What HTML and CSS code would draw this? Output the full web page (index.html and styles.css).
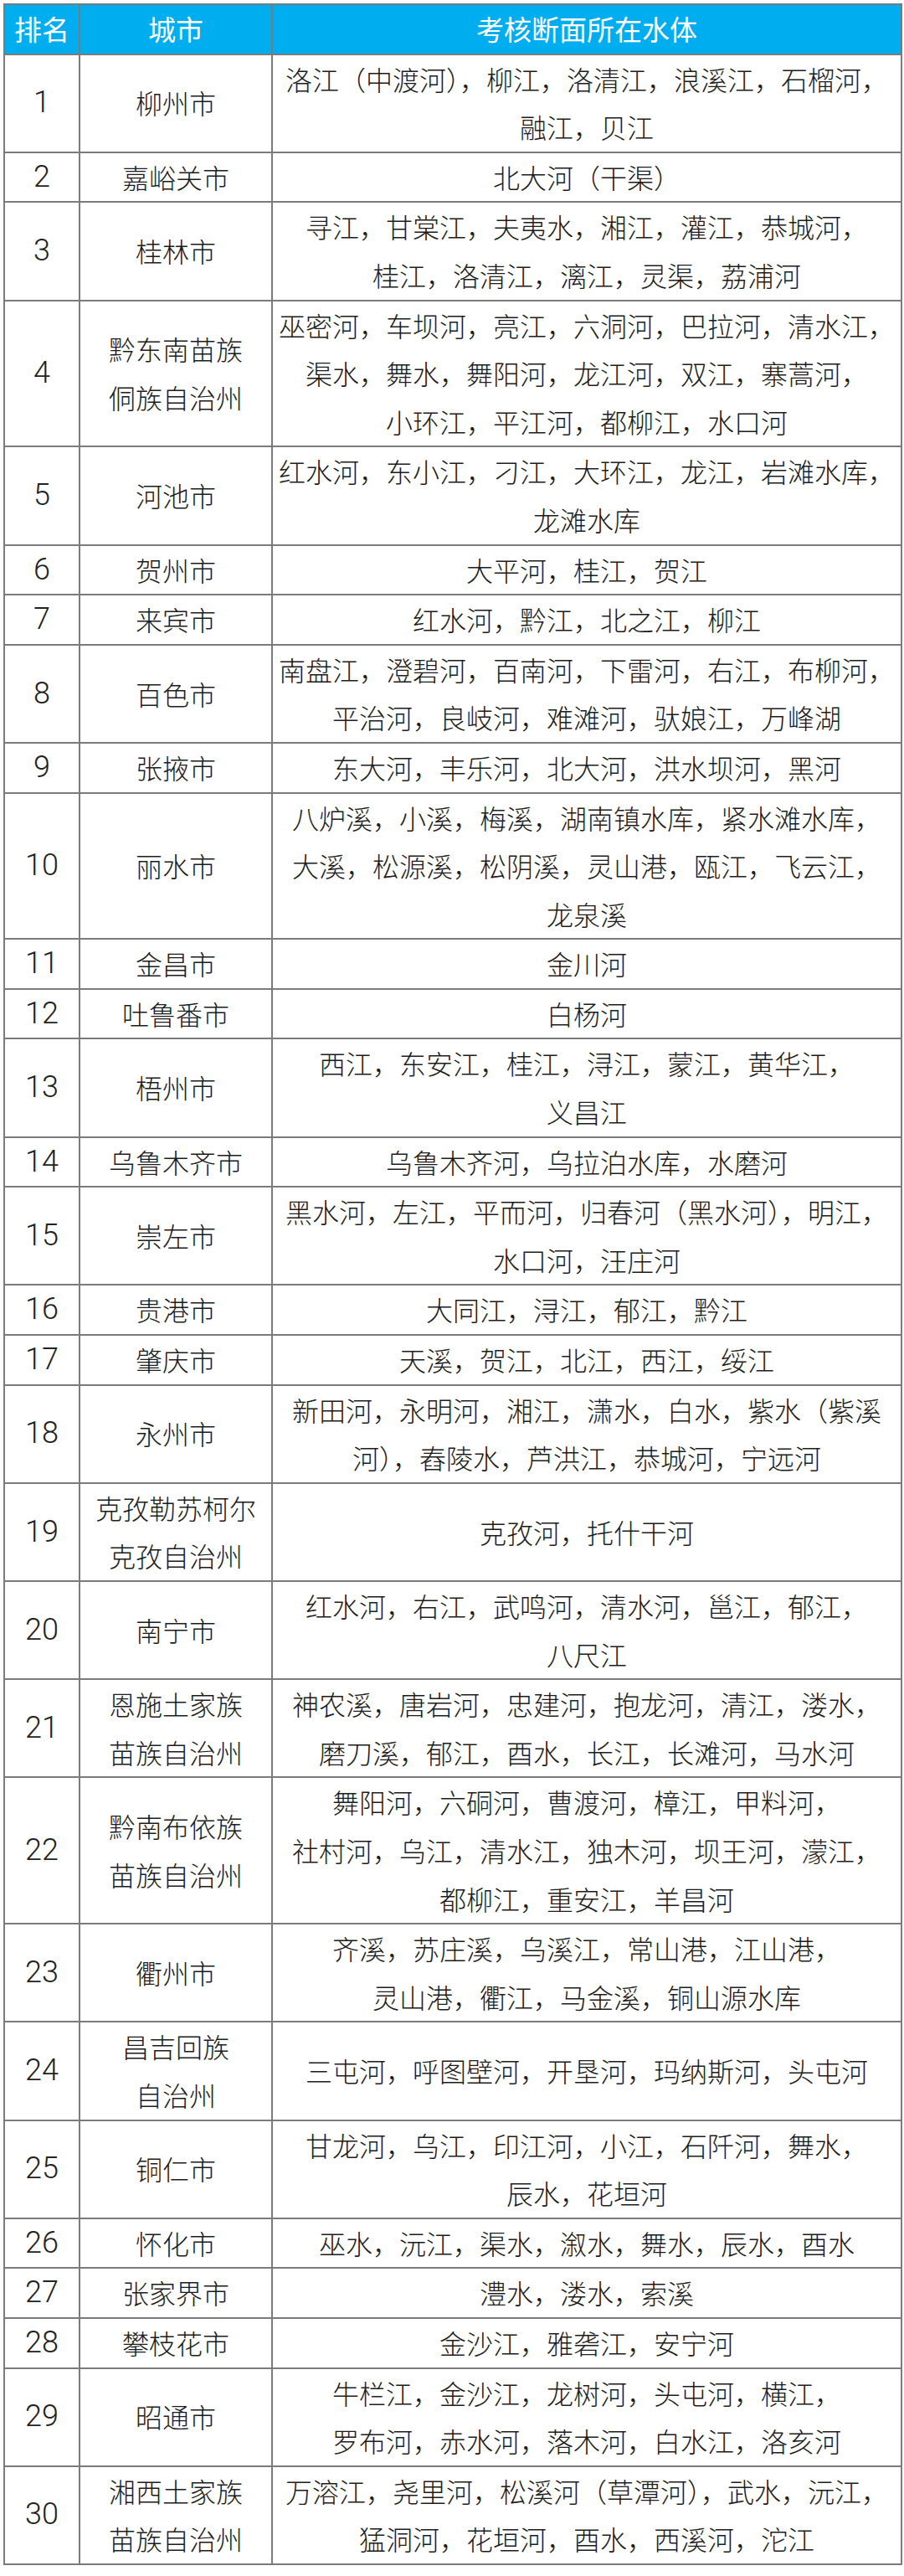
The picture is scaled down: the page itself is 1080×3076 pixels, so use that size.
FILE: index.html
```html
<!DOCTYPE html>
<html lang="zh-CN">
<head>
<meta charset="utf-8">
<title>考核断面所在水体排名</title>
<link rel="stylesheet" href="styles.css">
</head>
<body>
<table class="rank-table">
  <colgroup>
    <col class="c-rank">
    <col class="c-city">
    <col class="c-water">
  </colgroup>
  <thead>
    <tr><th>排名</th><th>城市</th><th>考核断面所在水体</th></tr>
  </thead>
  <tbody>
    <tr><td class="num">1</td><td>柳州市</td><td>洛江（中渡河），柳江，洛清江，浪溪江，石榴河，<br>融江，贝江</td></tr>
    <tr><td class="num">2</td><td>嘉峪关市</td><td>北大河（干渠）</td></tr>
    <tr><td class="num">3</td><td>桂林市</td><td>寻江，甘棠江，夫夷水，湘江，灌江，恭城河，<br>桂江，洛清江，漓江，灵渠，荔浦河</td></tr>
    <tr><td class="num">4</td><td>黔东南苗族<br>侗族自治州</td><td>巫密河，车坝河，亮江，六洞河，巴拉河，清水江，<br>渠水，舞水，舞阳河，龙江河，双江，寨蒿河，<br>小环江，平江河，都柳江，水口河</td></tr>
    <tr><td class="num">5</td><td>河池市</td><td>红水河，东小江，刁江，大环江，龙江，岩滩水库，<br>龙滩水库</td></tr>
    <tr><td class="num">6</td><td>贺州市</td><td>大平河，桂江，贺江</td></tr>
    <tr><td class="num">7</td><td>来宾市</td><td>红水河，黔江，北之江，柳江</td></tr>
    <tr><td class="num">8</td><td>百色市</td><td>南盘江，澄碧河，百南河，下雷河，右江，布柳河，<br>平治河，良岐河，难滩河，驮娘江，万峰湖</td></tr>
    <tr><td class="num">9</td><td>张掖市</td><td>东大河，丰乐河，北大河，洪水坝河，黑河</td></tr>
    <tr><td class="num">10</td><td>丽水市</td><td>八炉溪，小溪，梅溪，湖南镇水库，紧水滩水库，<br>大溪，松源溪，松阴溪，灵山港，瓯江，飞云江，<br>龙泉溪</td></tr>
    <tr><td class="num">11</td><td>金昌市</td><td>金川河</td></tr>
    <tr><td class="num">12</td><td>吐鲁番市</td><td>白杨河</td></tr>
    <tr><td class="num">13</td><td>梧州市</td><td>西江，东安江，桂江，浔江，蒙江，黄华江，<br>义昌江</td></tr>
    <tr><td class="num">14</td><td>乌鲁木齐市</td><td>乌鲁木齐河，乌拉泊水库，水磨河</td></tr>
    <tr><td class="num">15</td><td>崇左市</td><td>黑水河，左江，平而河，归春河（黑水河），明江，<br>水口河，汪庄河</td></tr>
    <tr><td class="num">16</td><td>贵港市</td><td>大同江，浔江，郁江，黔江</td></tr>
    <tr><td class="num">17</td><td>肇庆市</td><td>天溪，贺江，北江，西江，绥江</td></tr>
    <tr><td class="num">18</td><td>永州市</td><td>新田河，永明河，湘江，潇水，白水，紫水（紫溪<br>河），舂陵水，芦洪江，恭城河，宁远河</td></tr>
    <tr><td class="num">19</td><td>克孜勒苏柯尔<br>克孜自治州</td><td>克孜河，托什干河</td></tr>
    <tr><td class="num">20</td><td>南宁市</td><td>红水河，右江，武鸣河，清水河，邕江，郁江，<br>八尺江</td></tr>
    <tr><td class="num">21</td><td>恩施土家族<br>苗族自治州</td><td>神农溪，唐岩河，忠建河，抱龙河，清江，溇水，<br>磨刀溪，郁江，酉水，长江，长滩河，马水河</td></tr>
    <tr><td class="num">22</td><td>黔南布依族<br>苗族自治州</td><td>舞阳河，六硐河，曹渡河，樟江，甲料河，<br>社村河，乌江，清水江，独木河，坝王河，濛江，<br>都柳江，重安江，羊昌河</td></tr>
    <tr><td class="num">23</td><td>衢州市</td><td>齐溪，苏庄溪，乌溪江，常山港，江山港，<br>灵山港，衢江，马金溪，铜山源水库</td></tr>
    <tr><td class="num">24</td><td>昌吉回族<br>自治州</td><td>三屯河，呼图壁河，开垦河，玛纳斯河，头屯河</td></tr>
    <tr><td class="num">25</td><td>铜仁市</td><td>甘龙河，乌江，印江河，小江，石阡河，舞水，<br>辰水，花垣河</td></tr>
    <tr><td class="num">26</td><td>怀化市</td><td>巫水，沅江，渠水，溆水，舞水，辰水，酉水</td></tr>
    <tr><td class="num">27</td><td>张家界市</td><td>澧水，溇水，索溪</td></tr>
    <tr><td class="num">28</td><td>攀枝花市</td><td>金沙江，雅砻江，安宁河</td></tr>
    <tr><td class="num">29</td><td>昭通市</td><td>牛栏江，金沙江，龙树河，头屯河，横江，<br>罗布河，赤水河，落木河，白水江，洛亥河</td></tr>
    <tr><td class="num">30</td><td>湘西土家族<br>苗族自治州</td><td>万溶江，尧里河，松溪河（草潭河），武水，沅江，<br>猛洞河，花垣河，酉水，西溪河，沱江</td></tr>
  </tbody>
</table>
</body>
</html>
```

FILE: styles.css
```css
html, body {
  margin: 0;
  padding: 0;
  background: #ffffff;
}

body {
  padding: 4px;
}

.rank-table {
  width: 1072px;
  table-layout: fixed;
  border-collapse: collapse;
  font-family: "Noto Sans CJK SC", "Noto Sans", sans-serif;
  font-weight: 300;
  font-size: 32px;
  line-height: 57.6px;
  color: #1c1c1c;
}

.c-rank { width: 90px; }
.c-city { width: 230px; }
.c-water { width: 752px; }

.rank-table th,
.rank-table td {
  border: 2px solid #7b7b7b;
  padding: 0 4px;
  text-align: center;
  vertical-align: middle;
}

.rank-table th {
  background: #00aeef;
  color: #ffffff;
  font-weight: 400;
  font-size: 33px;
}

.rank-table td.num {
  font-family: Roboto, "Liberation Sans", sans-serif;
  font-weight: 300;
  font-size: 36px;
  color: #222222;
}
```
